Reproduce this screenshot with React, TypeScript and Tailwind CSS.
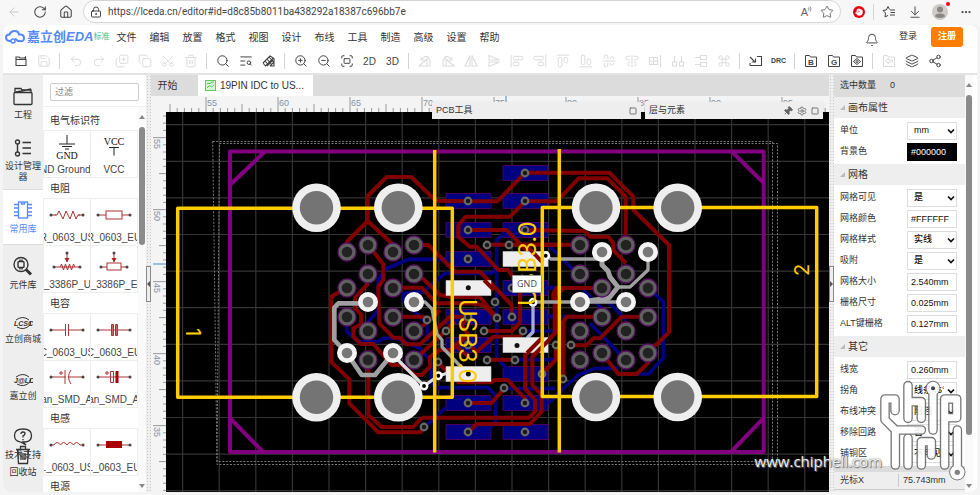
import { type ReactNode } from 'react'
import {
  AlignCenterHorizontal, AlignCenterVertical, AlignEndHorizontal, AlignEndVertical,
  AlignStartHorizontal, AlignStartVertical, ArrowDownToLine, ArrowLeft, Bell, Command,
  Copy, CopyPlus, Ellipsis, Fullscreen, Hand, House, Layers, LockKeyhole,
  Pin, Redo2, RotateCw, Save, Scissors, Search, Settings,
  Share2, Square, Star, TextSearch, Trash2, Undo2, ZoomIn, ZoomOut
} from 'lucide-react'

const MENUS = ['文件', '编辑', '放置', '格式', '视图', '设计', '布线', '工具', '制造', '高级', '设置', '帮助']

interface Tool {
  label: string
  icon: ReactNode
  disabled?: boolean
}

const S = 'size-3.5 stroke-[1.7]'

const Glyph = ({ d }: { d: string }) => (
  <svg viewBox="0 0 14 14" className="size-3.5" fill="none" stroke="currentColor" strokeWidth="1.100">
    <path d={d} />
  </svg>
)

const FolderMark = ({ mark }: { mark: 'B' | 'G' | 'eye' | 'back' }) => (
  <svg viewBox="0 0 14 14" className="size-3.5" fill="none" stroke="currentColor">
    <path d="M1.500 12.500V1.500h4l1 1.500h6v9.500z" />
    {mark === 'eye' && <><path d="M3.500 7.500 7 4.500l3.500 3L7 10.500z" /><circle cx="7" cy="7.500" r="1" /></>}
    {mark === 'back' && <path d="M6.500 4.500l-3 2.500 3 2.500v-1.500h4v-2h-4z" />}
    {mark.length === 1 && (
      <text x="7" y="10.500" textAnchor="middle" fontSize="8" fontWeight="700" stroke="none" fill="currentColor">{mark}</text>
    )}
  </svg>
)

const TOOL_GROUPS: Tool[][] = [
  [
    { label: '打开', icon: <Glyph d="M2 5.500h10v6H2zM2 5.500V3h3l1 1h4.500l1-1v2.500" /> },
    { label: '保存', icon: <Save className={S} />, disabled: true }
  ],
  [
    { label: '撤销', icon: <Undo2 className={S} />, disabled: true },
    { label: '重做', icon: <Redo2 className={S} />, disabled: true },
    { label: '克隆', icon: <CopyPlus className={`${S} -scale-y-100`} />, disabled: true },
    { label: '复制', icon: <Copy className={S} />, disabled: true },
    { label: '剪切', icon: <Scissors className={`${S} -rotate-90`} />, disabled: true },
    { label: '删除', icon: <Trash2 className={S} />, disabled: true }
  ],
  [
    { label: '查找', icon: <Search className={S} /> },
    { label: '查找相似', icon: <TextSearch className={S} /> },
    { label: '测量', icon: <Glyph d="M1 9 8 2l4 2.500V12H8M1 9l2.500 3L11 4.500M3 7l3.500 4M5 5l4 5M7 3l4.500 5M5 12l6-6M8 12l4-4" /> }
  ],
  [
    { label: '放大', icon: <ZoomIn className={S} /> },
    { label: '缩小', icon: <ZoomOut className={S} /> },
    { label: '适应窗口', icon: <Fullscreen className={S} /> },
    { label: '2D', icon: <span className="text-[10px]">2D</span> },
    { label: '3D', icon: <span className="text-[10px]">3D</span> }
  ],
  [
    { label: '左旋', icon: <Glyph d="M1 12 9 5v7zM4 5q3-4 6-2l2 4V12H9M3 3v3h3" />, disabled: true },
    { label: '右旋', icon: <Glyph d="M13 12 5 5v7zM10 5q-3-4-6-2L2 7v5h3M11 3v3H8" />, disabled: true },
    { label: '水平翻转', icon: <Glyph d="M6 1.500V12H1zM8 1.500V12h5z" />, disabled: true },
    { label: '垂直翻转', icon: <Glyph d="M2 1.500 12.500 6H2zM2 12.500 12.500 8H2z" />, disabled: true },
    { label: '左对齐', icon: <AlignStartVertical className={S} />, disabled: true },
    { label: '右对齐', icon: <AlignEndVertical className={S} />, disabled: true },
    { label: '顶对齐', icon: <AlignStartHorizontal className={S} />, disabled: true },
    { label: '底对齐', icon: <AlignEndHorizontal className={S} />, disabled: true },
    { label: '水平居中', icon: <AlignCenterHorizontal className={S} />, disabled: true },
    { label: '垂直居中', icon: <AlignCenterVertical className={S} />, disabled: true },
    { label: '网格对齐', icon: <Glyph d="M1.500 3.500h4v7h-4zM5.500 3.500h4v7h-4zM1.500 7h8M12.500 1v12" />, disabled: true },
    { label: '水平分布', icon: <Glyph d="M1.500 8h4v4h-4zM8.500 8h4v4h-4zM3.500 2v6M10.500 2v6" />, disabled: true },
    { label: '垂直分布', icon: <Glyph d="M6.500 1.500h6v4h-6zM6.500 8.500h6v4h-6zM1 3.500h5.500M1 10.500h5.500" />, disabled: true },
    { label: '阵列', icon: <Command className={S} />, disabled: true }
  ],
  [
    { label: '导入变更', icon: <Glyph d="M1 11.500h11.500v-9H8M1 3l5 5M6.500 4.500V8H3M1 11.500V9" /> },
    { label: '设计规则检查', icon: <span className="text-[7px] font-semibold">DRC</span> }
  ],
  [
    { label: '物料清单', icon: <FolderMark mark="B" /> },
    { label: '制造文件', icon: <FolderMark mark="G" /> },
    { label: '坐标文件', icon: <FolderMark mark="eye" /> }
  ],
  [
    { label: '返回', icon: <FolderMark mark="back" />, disabled: true },
    { label: '图层', icon: <Layers className={S} /> },
    { label: '分享', icon: <Share2 className={S} /> }
  ]
]

function BrowserBar() {
  return (
    <div className="flex h-[25px] shrink-0 items-start bg-[#f7f7f7] text-[#444]">
      <div className="flex h-6 w-[83px] items-center gap-3 pl-[7px]">
        <button aria-label="返回"><ArrowLeft className="size-3.5 stroke-[1.5] text-[#c4c4c4]" /></button>
        <button aria-label="刷新"><RotateCw className="size-3.5 stroke-[1.8]" /></button>
        <button aria-label="主页"><House className="size-3.5 stroke-[1.8]" /></button>
      </div>
      <div className="flex h-[23px] flex-1 items-center rounded-full border border-[#d5d5d5] bg-white px-1.5">
        <LockKeyhole className="size-3 shrink-0 stroke-2" />
        <input
          aria-label="地址"
          readOnly
          value="https://lceda.cn/editor#id=d8c85b8011ba438292a18387c696bb7e"
          className="min-w-0 flex-1 bg-transparent pl-1.5 font-[Roboto,sans-serif] text-[10px] text-[#444] outline-none"
        />
        <button aria-label="朗读" className="flex items-start px-2 text-[11px] leading-3 text-[#666]">
          A<svg viewBox="0 0 4 6" className="h-1.5 w-1" fill="none" stroke="currentColor" strokeWidth="0.700"><path d="M.5 1.500q1 1.500 0 3M2 .5q2 2.500 0 5" /></svg>
        </button>
        <button aria-label="收藏"><Star className="size-3.5 stroke-[1.4] text-[#555]" /></button>
      </div>
      <div className="flex h-6 w-[139px] items-center pl-3">
        <button aria-label="拦截广告" className="flex size-3 items-center justify-center rounded-full bg-[#e60012]">
          <Hand className="size-2 fill-white stroke-2 text-white" />
        </button>
        <span className="ml-2 h-4 w-px bg-[#d5d5d5]" />
        <button aria-label="收藏夹" className="ml-2">
          <svg viewBox="0 0 14 14" className="size-3.5" fill="none" stroke="currentColor"><path d="M7.500 4.500 6 1.500 4.300 5 1 5.500l2.500 2.500L3 12l3-1.600M8 5h5M8.500 7.500H13M8 10h5" /></svg>
        </button>
        <button aria-label="下载" className="ml-3"><ArrowDownToLine className="size-3.5 stroke-[1.6]" /></button>
        <button aria-label="用户" className="relative ml-2.5 size-4 rounded-full bg-[#cfcbc8]">
          <svg viewBox="0 0 16 16" className="size-4" fill="#8d8783"><circle cx="8" cy="5.500" r="3" /><path d="M3 12.500q0-3 5-3t5 3q-5 3-10 0z" /></svg>
          <span className="absolute -top-0.5 -right-0.5 size-1 rounded-full bg-[#f00018]" />
        </button>
        <button aria-label="更多" className="ml-3"><Ellipsis className="size-3 stroke-[2.5]" /></button>
      </div>
    </div>
  )
}

function Header() {
  return (
    <header className="shrink-0 border-b-2 border-[#e4e4e4] bg-white">
      <div className="flex h-6 items-center pr-3.5 pl-0.5">
        <svg viewBox="0 0 20 14" className="h-3.5 w-5 shrink-0" fill="none" stroke="#5588ff" strokeWidth="2">
          <path d="M6 11H4.500Q1 10.500 1 7.500 1 4.500 4.500 4.500 6 1 9.500 1q4 0 4.500 3.500 5-.5 5 3.500t-4 3h-2L10 8.500" />
          <circle cx="8" cy="11" r="2" strokeWidth="1.500" />
        </svg>
        <span className="ml-0.5 text-[13px] leading-5 font-bold whitespace-nowrap text-[#5588ff]">
          嘉立创<i>EDA</i>
        </span>
        <span className="text-[8px] whitespace-nowrap text-[#35c496]">标准</span>
        <nav className="ml-[7px] flex gap-[13px] text-[10px] text-[#333]">
          {MENUS.map(m => <button key={m} className="w-5 whitespace-nowrap">{m}</button>)}
        </nav>
        <button aria-label="通知" className="mt-1.5 ml-auto"><Bell className="size-3.5 stroke-[1.6] text-[#444]" /></button>
        <a href="#login" className="ml-5 text-[9px] text-[#333]">登录</a>
        <button className="ml-3.5 h-5 w-8 rounded-[3px] bg-[#ff7d00] text-[9px] font-bold text-white">注册</button>
      </div>
      <div className="flex h-6 items-center pl-1.5 text-[#444]">
        {TOOL_GROUPS.map((group, i) => (
          <div key={i} className="flex items-center">
            {i > 0 && <span className="mx-1 h-4 w-px bg-[#d4d4d4]" />}
            {group.map(t => (
              <button
                key={t.label}
                aria-label={t.label}
                disabled={t.disabled}
                className="flex h-5 w-[23px] items-center justify-center disabled:text-[#dcdcdc]"
              >
                {t.icon}
              </button>
            ))}
          </div>
        ))}
      </div>
    </header>
  )
}

// Left navigation
const NAV = [
  { label: '工程', icon: <svg viewBox="0 0 22 20" className="h-5 w-[22px]" fill="none" stroke="currentColor" strokeWidth="1.300"><rect x="2" y="6.500" width="18" height="12" rx="1" /><path d="M3 6.500V2.500h6l1 1.500h9v2.500M4 6l6-1 9-2" /></svg> },
  { label: '设计管理器', icon: <svg viewBox="0 0 18 18" className="size-[18px] shrink-0" fill="none" stroke="currentColor" strokeWidth="1.400"><circle cx="3.500" cy="3" r="2" /><circle cx="3.500" cy="15" r="2" /><path d="M3.500 5v8M8.500 3.500H17M8.500 9H17M8.500 14.500H17" /></svg> },
  { label: '常用库', icon: <svg viewBox="0 0 20 20" className="size-5" fill="none" stroke="currentColor" strokeWidth="1.300"><rect x="5.500" y="2" width="9" height="16" /><path d="M1 4.500h4.500M1 8h4.500M1 12h4.500M1 15.500h4.500M14.500 4.500H19M14.500 8H19M14.500 12H19M14.500 15.500H19M8.500 2v2h3V2" /></svg> },
  { label: '元件库', icon: <svg viewBox="0 0 20 20" className="size-5" fill="none" stroke="currentColor" strokeWidth="1.400"><circle cx="8" cy="8.500" r="7" /><path d="m13 13.500 5 5" strokeWidth="3" /><rect x="5" y="5.500" width="6" height="6" rx="1" /><path d="M7 3.500v2M9 3.500v2M7 11.500v2M9 11.500v2" /></svg> },
  { label: '立创商城', icon: <svg viewBox="0 0 20 14" className="h-3.5 w-5"><path d="M3 4q7-5 13 0M4 11q7 4 13-2 1.500-2 0-4" fill="none" stroke="currentColor" /><text x="1" y="9.500" fontSize="7" fontWeight="700" fontStyle="italic" fill="currentColor">LCSC</text></svg> },
  { label: '嘉立创', icon: <svg viewBox="0 0 20 14" className="h-3.5 w-5"><path d="M3 4q7-5 13 0M4 11q7 4 13-2 1.500-2 0-4" fill="none" stroke="currentColor" /><text x="1" y="9.500" fontSize="7" fontWeight="700" fontStyle="italic" fill="currentColor">J@LC</text></svg> },
  { label: '技术支持', icon: <svg viewBox="0 0 20 18" className="h-[18px] w-5" fill="none" stroke="currentColor" strokeWidth="1.300"><path d="M10 1q8.500 0 8.500 6.500T11 14h-1l3 3-6-3.200Q1.500 13 1.500 7.500 1.500 1 10 1z" /><path d="M8 6q0-2 2-2t2 1.700Q12 7 10 7.800V9.500M10 11v1.300" /></svg> }
]

function SideNav() {
  return (
    <nav className="relative flex w-10 shrink-0 flex-col overflow-hidden bg-[#eee] text-[9px] leading-[11px] text-[#333]">
      {NAV.map(n => (
        <button
          key={n.label}
          className={
            n.label === '常用库'
              ? 'flex h-14 shrink-0 flex-col items-center justify-center gap-1 border-y border-[#ddd] bg-white text-[#5588ff]'
              : 'flex h-[57px] shrink-0 flex-col items-center justify-center gap-1'
          }
        >
          {n.icon}
          <span className="w-9">{n.label}</span>
        </button>
      ))}
      <button className="absolute bottom-3.5 left-0 flex w-10 flex-col items-center">
        <svg viewBox="0 0 16 20" className="h-5 w-4" fill="none" stroke="currentColor" strokeWidth="1.300">
          <path d="M1 4.500h14M5.500 4V1.500h5V4M2.500 4.500l1 14h9l1-14M6 8v7M8 8v7M10 8v7" />
        </svg>
        <span className="mt-0.5">回收站</span>
      </button>
    </nav>
  )
}

// Component library
const Leads = () => (
  <>
    <path d="M4 15h32" stroke="#a33" />
    <circle cx="4" cy="15" r="1.500" fill="#444" /><circle cx="36" cy="15" r="1.500" fill="#444" />
  </>
)

const PotLeads = () => (
  <>
    <path d="M7 20h26M20 6v9" stroke="#a33" />
    <circle cx="7" cy="20" r="1.500" fill="#444" /><circle cx="33" cy="20" r="1.500" fill="#444" />
    <circle cx="20" cy="6" r="1.500" fill="#444" />
    <path d="m17.500 11 2.500 4.500 2.500-4.500z" fill="#a22" />
  </>
)

const LIBRARY: { title: string; parts: { name: string; art: ReactNode }[] }[] = [
  {
    title: '电气标识符',
    parts: [
      { name: 'GND Grounded', art: <><path d="M20 3v9M12 12h16M15 14.500h10M18 17h4" stroke="#222" /><text x="20" y="27" textAnchor="middle" fontSize="10" className="font-['Liberation_Serif',serif]" fill="#111">GND</text></> },
      { name: 'VCC', art: <><text x="20" y="13" textAnchor="middle" fontSize="10" className="font-['Liberation_Serif',serif]" fill="#111">VCC</text><path d="M15 15.500h10M20 15.500v8" stroke="#222" /></> }
    ]
  },
  {
    title: '电阻',
    parts: [
      { name: 'R_0603_US', art: <><Leads /><path d="M9 15h22" stroke="#fff" strokeWidth="2" /><path d="M8 15h2l2-4 4 8 3-8 4 8 3-8 3 8 2-4h2" stroke="#a33" /></> },
      { name: 'R_0603_EU', art: <><Leads /><rect x="12" y="11" width="16" height="8" fill="#fff" stroke="#a33" /></> },
      { name: 'R_3386P_US', art: <><PotLeads /><path d="m13 20 1.500-3 2 6 2-6 2 6 2-6 2 6 2-6 1.500 3" stroke="#a33" /></> },
      { name: 'R_3386P_EU', art: <><PotLeads /><rect x="13" y="16" width="14" height="7" fill="#fff" stroke="#a33" /></> }
    ]
  },
  {
    title: '电容',
    parts: [
      { name: 'C_0603_US', art: <><Leads /><path d="M19 15h2" stroke="#fff" strokeWidth="3" /><path d="M18.500 9v12M21.500 9v12" stroke="#a33" /></> },
      { name: 'C_0603_EU', art: <><Leads /><path d="M17.500 9.500h2v11h-2zM21.500 9.500h2v11h-2z" fill="#c66" stroke="#a33" /></> },
      { name: 'Tan_SMD_A_', art: <><Leads /><path d="M18 8v14M24 8q-5 7 0 14M12 11h4M14 9v4" stroke="#a33" /><path d="M19 15h2" stroke="#fff" strokeWidth="2" /></> },
      { name: 'Tan_SMD_A_', art: <><Leads /><path d="M23 9v12" stroke="#a00" strokeWidth="3" /><path d="M16.500 9.500h3v11h-3zM11 11h4M13 9v4" stroke="#a33" /></> }
    ]
  },
  {
    title: '电感',
    parts: [
      { name: 'L_0603_US', art: <><circle cx="4" cy="15" r="1.500" fill="#444" /><circle cx="36" cy="15" r="1.500" fill="#444" /><path d="M4 15h3q3-5 6.500 0 3-5 6.500 0 3-5 6.500 0 3-5 6.500 0h3" stroke="#a33" /></> },
      { name: 'L_0603_EU', art: <><Leads /><rect x="12" y="11" width="16" height="7" fill="#a00" /></> }
    ]
  },
  { title: '电源', parts: [] }
]

function Library() {
  return (
    <aside className="flex w-[103px] shrink-0 flex-col bg-white">
      <div className="flex h-8 shrink-0 items-center border-b border-[#f0f0f0] px-[7px] pt-0.5">
        <input aria-label="过滤" placeholder="过滤" className="h-[18px] w-full rounded-xs border border-[#ccc] px-1 text-[9px] placeholder:text-[#888]" />
      </div>
      <div className="flex min-h-0 flex-1">
        <div className="min-w-0 flex-1 overflow-hidden pt-[3px]">
          {LIBRARY.map(group => (
            <section key={group.title}>
              <h2 className="h-5 pl-[7px] text-[10px] leading-[22px] whitespace-nowrap text-[#333]">{group.title}</h2>
              <div className="grid grid-cols-2 border-t border-l border-[#eee]">
                {group.parts.map((p, i) => (
                  <button key={i} className="flex h-[47px] min-w-0 flex-col items-center overflow-hidden border-r border-b border-[#eee]">
                    <svg viewBox="0 0 40 30" className="h-8 w-10 shrink-0" fill="none">{p.art}</svg>
                    <span className="flex w-full justify-center overflow-hidden text-[10px] leading-[14px] whitespace-nowrap text-[#444]">
                      {p.name}
                    </span>
                  </button>
                ))}
              </div>
            </section>
          ))}
        </div>
        <ScrollBar thumb="h-[118px]" />
      </div>
    </aside>
  )
}

function ScrollBar({ thumb }: { thumb: string }) {
  return (
    <div className="flex w-2 shrink-0 flex-col items-center bg-[#fafafa] pt-1 pb-1">
      <svg viewBox="0 0 6 4" className="my-1 h-1 w-1.5 shrink-0" fill="#888"><path d="M0 4 3 0l3 4z" /></svg>
      <span className={`mt-1 w-1.5 rounded-full bg-[#8b8b8b] ${thumb}`} />
      <svg viewBox="0 0 6 4" className="mt-auto h-1 w-1.5 shrink-0" fill="#888"><path d="M0 0l3 4 3-4z" /></svg>
    </div>
  )
}

function Splitter({ side }: { side: 'left' | 'right' }) {
  return (
    <div className="flex w-[5px] shrink-0 items-center bg-[#eee] bg-[radial-gradient(#c8c8c8_25%,transparent_30%)] bg-size-[3px_3px]">
      <button aria-label="折叠" className="flex h-9 w-[5px] items-center justify-center border border-[#888] bg-[#eee]">
        <svg viewBox="0 0 3 6" className="h-1.5 w-[3px]" fill="#555">
          <path d={side === 'left' ? 'M3 0v6L0 3z' : 'M0 0v6l3-3z'} />
        </svg>
      </button>
    </div>
  )
}

// Rulers, 72px for each 5mm
function TopRuler() {
  return (
    <svg className="block h-4 w-full bg-[#f4f4f4]" stroke="#999">
      {Array.from({ length: 92 }, (_, i) => {
        const x = 19 + i * 7.2
        const h = i % 10 === 5 ? 15 : i % 5 === 0 ? 8 : 4
        return <path key={i} d={`M${x} 16v${-h}`} />
      })}
      {Array.from({ length: 9 }, (_, i) => (
        <text key={i} x={56 + i * 72} y="10" fontSize="9" stroke="none" fill="#8791a0">{55 + i * 5}</text>
      ))}
      <path d="M355 0v6" stroke="#3b8fd0" />
    </svg>
  )
}

function SideRuler() {
  return (
    <svg className="block h-full w-[15px] shrink-0 bg-[#f4f4f4]" stroke="#999">
      {Array.from({ length: 54 }, (_, i) => {
        const y = 4 + i * 7.2
        const w = (i + 7) % 10 === 0 ? 13 : (i + 7) % 5 === 0 ? 7 : 3
        return <path key={i} d={`M15 ${y}h${-w}`} />
      })}
      {[55, 50, 45, 40, 35].map((n, i) => (
        <text key={n} transform={`translate(3 ${27 + i * 72}) rotate(90)`} fontSize="9" stroke="none" fill="#8791a0">{n}</text>
      ))}
      <path d="M2 152h13" stroke="#3b8fd0" />
    </svg>
  )
}

// Board geometry. Traces are stored in thirds of a pixel,
// each list relative to the origin of its block.
const TRACES: { at: [number, number]; red: string; blue: string; net: string }[] = [
  {
    at: [165, 110],
    red: 'M545 425V396L608 333V258L665 201H739L812 272L910 274M608 333L683 403',
    blue: 'M655 480L730 448H910',
    net: ''
  },
  {
    at: [325, 225],
    red: `M130 60L175 118V163L160 185V208L163 295L205 338H225L243 358H285L375 275H430
      M268 60H310L390 140H465L560 240V275M268 146L295 162L345 210L380 216H465L516 280
      M204 188H290L335 235H435L475 240L510 275M65 188L18 215V410L73 463V535L160 622H285L298 607
      M130 175L90 218V250L108 268V298L85 310V335L108 357H145L200 420H230L270 450H290L315 425V395L345 375H380L430 330
      M204 275H295L307 286M130 405V570L170 606H265L290 578M268 405L362 318L390 290M268 320L310 290L345 255
      M290 578H612L630 560V525L600 490V390L655 340M338 412L400 472H500L508 465H548L601 522V534
      M430 534H500L538 490M430 620L455 597H615L650 560V510L622 480V395L690 325V210L720 188
      M486 404H571M478 318H560L585 293V200M430 360L455 380L505 335H585L593 318M430 275L410 300L430 330L390 360L430 395
      M430 15H545L645 118M400 0V35L435 65H455L520 135H550L563 155M485 59H720`,
    blue: `M160 260V165L180 132L250 103H370M295 200L360 145H500L515 125V45L540 22M235 230V205L300 200M235 228L300 290
      M65 275V320L100 350H160L175 340H215L285 370L318 410V475L335 488H490L512 512V590L495 610M307 286V350
      M130 290L160 255M515 120V400L545 430M298 607L362 548M540 490H690M600 188H720M593 318H720M571 404H720M670 275H720`,
    net: 'M130 235H40L28 248V345L65 384L110 450H150L204 384'
  },
  {
    at: [420, 110],
    red: `M145 274H232L316 188H568L640 260V300L747 405V667L683 728M316 274L270 320H138L115 345V375
      M316 274H410L476 205H562L617 260V404M316 360L495 363L510 380H565L580 400V420L618 460M265 404H480M545 534H410L400 550V570`,
    blue: 'M385 404L455 475L480 491M385 534H410M490 540L560 610M683 534L730 575V745L685 792H650',
    net: ''
  },
  {
    at: [420, 300],
    red: `M545 50H440L430 65V238M683 50H605L540 115H520L500 136H453M407 136V180L365 222M545 158L595 222H650L683 190V158
      M404 0V100L335 165`,
    blue: 'M480 50H385M510 70L618 181M560 0L618 60M595 205H525L475 225L430 265L385 310',
    net: ''
  }
]

const SIGNAL_PADS = [
  [347, 252], [368, 245], [393, 252], [414, 245], [368, 274], [414, 274], [347, 288], [393, 288],
  [347, 317], [393, 317], [368, 331], [414, 331], [368, 360], [414, 360],
  [580, 245], [626, 245], [580, 274], [626, 274], [602, 288], [648, 288], [602, 317], [648, 317],
  [580, 331], [626, 331], [602, 353], [648, 353], [580, 360], [626, 360]
]

const GND_PADS = [[368, 302], [414, 302], [347, 353], [393, 353], [602, 252], [648, 252], [580, 302], [626, 302]]

const HOLES = [[316.5, 207.7], [398.3, 207.7], [596, 207.7], [677.7, 207.7], [316.5, 397.3], [398.3, 397.3], [596, 397], [677.7, 397]]

const VIAS = [
  [487, 245], [509, 245], [495, 302], [427, 320], [446, 331], [484, 331], [497, 318], [512, 317], [523, 331],
  [487, 360], [515, 360], [504, 388], [438, 362], [424, 427], [468, 230], [468, 259], [468, 317], [468, 345],
  [468, 403], [468, 432], [525, 230], [512, 288], [542, 374], [556, 345], [525, 403], [525, 432], [571, 345],
  [563, 379], [525, 173], [525, 201], [468, 201]
]

const GND_VIAS = [[545.7, 255.7], [533, 302.3], [438.3, 375.7], [424, 386]]

const FINGERS = [
  ...[201, 230, 259, 288, 317, 345, 374, 403, 432].map(y => ({ x: 446, y, gnd: y === 288 || y === 374 })),
  ...[173, 201, 230, 259, 288, 317, 345, 374, 403, 432].map(y => ({ x: 503, y, gnd: y === 259 || y === 345 }))
]

function Board() {
  const traces = (kind: 'red' | 'blue' | 'net') =>
    TRACES.map((t, i) => (
      <path key={i} d={t[kind]} transform={`translate(${t.at[0]} ${t.at[1]}) scale(.33333)`} />
    ))

  return (
    <svg className="block min-w-0 flex-1 bg-black" aria-label="PCB">
      <g transform="translate(-166 -112)" fill="none" strokeLinejoin="round">
        <g stroke="#343434" strokeWidth="1.200">
          {Array.from({ length: 40 }, (_, i) => <path key={i} d={`M${182.6 + i * 36.6} 0v1200`} />)}
          {Array.from({ length: 24 }, (_, i) => <path key={i} d={`M0 ${124.7 + i * 36.6}h2000`} />)}
        </g>
        <g stroke="#777" strokeDasharray="2 1.500">
          <path d="M212.700 141.500H772.500V461.500H217L212.700 141.500" />
          <path d="M219.500 143.500H777.500V464.500H217L219.500 143.500" />
        </g>
        <g fill="#000080" stroke="#480060">
          {FINGERS.filter(f => !f.gnd).map(f => <rect key={`${f.x}-${f.y}`} x={f.x} y={f.y - 7.5} width="45" height="15" />)}
        </g>
        <g stroke="#000080" strokeWidth="11">{traces('blue')}</g>
        <g stroke="#800000" strokeWidth="12">{traces('red')}</g>
        <g stroke="#a0a0a0" strokeWidth="14">{traces('net')}</g>
        <g stroke="#a0a0a0" strokeWidth="3.300">
          <path d="M414 302h11l7 7 5 25 5 6v7l24 25M546 256l5 3h51M533 302h93M648 252v18l-18 17h-13" />
          <path d="M602 252v13l6 6 2 6 8 10-9 11-28 4" strokeWidth="5" />
          <path d="M533 302v30l-6 6" stroke="#aaaad0" />
          <path d="M397 359l27 27 14-10 10-3" stroke="#ddd" />
        </g>
        <g fill="#eee" stroke="#ccc" strokeWidth="0.600">
          {FINGERS.filter(f => f.gnd).map(f => <rect key={`${f.x}-${f.y}`} x={f.x} y={f.y - 7.5} width="45" height="15" />)}
        </g>
        <path d="M484 280l10 10M529 248l13 14M527 353l16-16M534 355l16-16" stroke="#800000" strokeWidth="4" />

        {SIGNAL_PADS.map(([x, y]) => (
          <g key={`${x}-${y}`}>
            <circle cx={x} cy={y} r="9" fill="#606060" stroke="#5c1266" strokeWidth="1.300" />
            <circle cx={x} cy={y} r="5.300" fill="#222" />
          </g>
        ))}
        {GND_PADS.map(([x, y]) => (
          <g key={`${x}-${y}`}>
            <circle cx={x} cy={y} r="10" fill="#f4f4f4" />
            <circle cx={x} cy={y} r="5.300" fill="#777" />
          </g>
        ))}
        <g fill="#181818" stroke="#686868" strokeWidth="2.200">
          {VIAS.map(([x, y]) => <circle key={`${x}-${y}`} cx={x} cy={y} r="3.300" />)}
        </g>
        <g fill="#111">
          <circle cx="468.300" cy="287.700" r="2.500" /><circle cx="517" cy="345.500" r="2.500" /><circle cx="468.300" cy="374" r="2.500" />
        </g>
        <g fill="#000" stroke="#fff" strokeWidth="2.500">
          {GND_VIAS.map(([x, y]) => <circle key={`${x}-${y}`} cx={x} cy={y} r="3.200" />)}
        </g>

        <path
          d="M230 151.500H763.700V452H230zM265 151.500L230 185M230 418L263 452M731.700 151.500L763.700 183M763.700 418L731 452"
          stroke="#800080" strokeWidth="4"
        />
        <g stroke="#ffcc00" strokeWidth="3.500">
          <path d="M177.700 208.300H452.300V397.300H177.700z" />
          <path d="M542.300 207.500H816.700V396.500H542.300z" />
          <path d="M434.700 150V452.500M559.300 149V452.500" />
        </g>
        {HOLES.map(([x, y]) => (
          <g key={`${x}-${y}`}>
            <circle cx={x} cy={y} r="24.300" fill="#efefef" />
            <circle cx={x} cy={y} r="16.700" fill="#747474" />
          </g>
        ))}
        <g fill="#ffcc00" className="font-[Inter,sans-serif]">
          <text transform="translate(459 299) rotate(90)" fontSize="24">USB3.0</text>
          <text transform="translate(536 306) rotate(-90)" fontSize="24">USB3.0</text>
          <text transform="translate(186 328) rotate(90)" fontSize="20">1</text>
          <text transform="translate(809 276) rotate(-90)" fontSize="20">2</text>
        </g>
        <rect x="512.500" y="275.500" width="29" height="17" fill="#fff" stroke="#999" />
        <text x="527" y="287" textAnchor="middle" fontSize="9" fill="#444" className="font-['Open_Sans',sans-serif]">GND</text>
      </g>
    </svg>
  )
}

function Workspace() {
  return (
    <main className="relative flex min-w-0 flex-1 flex-col">
      <div className="flex h-[21px] shrink-0 bg-[#dcdcdc] text-[10px] text-[#333]">
        <button className="w-[47px] pr-3.5">开始</button>
        <button className="flex w-[115px] items-center gap-1 bg-white pl-[7px] whitespace-nowrap">
          <svg viewBox="0 0 11 11" className="size-[11px] shrink-0" fill="none" stroke="#62c95e">
            <rect x="0.500" y="0.500" width="10" height="10" fill="#d9f5d6" /><path d="M2 3.500h3l2-1.500h2M2 8l2.500-2.500L6.500 7 9 5" />
          </svg>
          19PIN IDC to US...
        </button>
      </div>
      <TopRuler />
      <div className="flex min-h-0 flex-1">
        <SideRuler />
        <Board />
      </div>
      <div className="absolute top-[27px] left-[281px] flex gap-1 text-[9px] text-[#333]">
        <div className="flex h-[17px] w-[209px] items-center justify-between bg-[#eee] px-1 shadow-sm">
          PCB工具
          <button aria-label="展开"><Square className="size-2 stroke-[3] text-[#777]" /></button>
        </div>
        <div className="flex h-[17px] w-[178px] items-center bg-[#eee] px-1 shadow-sm">
          层与元素
          <button aria-label="固定" className="ml-auto"><Pin className="size-2.5 rotate-45 fill-[#666] text-[#666]" /></button>
          <button aria-label="设置" className="mx-1"><Settings className="size-2.5 text-[#666]" /></button>
          <button aria-label="展开"><Square className="size-2 stroke-[3] text-[#777]" /></button>
        </div>
      </div>
    </main>
  )
}

// Properties
type Field = { label: string; value: string; select?: boolean; dark?: boolean }

const SECTIONS: { title: string; fields: Field[] }[] = [
  {
    title: '画布属性',
    fields: [
      { label: '单位', value: 'mm', select: true },
      { label: '背景色', value: '#000000', dark: true }
    ]
  },
  {
    title: '网格',
    fields: [
      { label: '网格可见', value: '是', select: true },
      { label: '网格颜色', value: '#FFFFFF' },
      { label: '网格样式', value: '实线', select: true },
      { label: '吸附', value: '是', select: true },
      { label: '网格大小', value: '2.540mm' },
      { label: '栅格尺寸', value: '0.025mm' },
      { label: 'ALT键栅格', value: '0.127mm' }
    ]
  },
  {
    title: '其它',
    fields: [
      { label: '线宽', value: '0.260mm' },
      { label: '拐角', value: '线条45°', select: true },
      { label: '布线冲突', value: '阻挡', select: true },
      { label: '移除回路', value: '否', select: true },
      { label: '铺铜区', value: '不可见', select: true }
    ]
  }
]

function FieldRow({ label, value, select, dark }: Field) {
  return (
    <div className="flex h-[21px] items-center justify-between pr-2 pl-1.5">
      <label htmlFor={label}>{label}</label>
      {select ? (
        <div className="relative flex">
          <select id={label} defaultValue={value} className="h-[18px] w-[50px] appearance-none border border-[#ddd] bg-white pr-3 pl-1.5 text-[9px] font-medium text-[#111]">
            <option>{value}</option>
          </select>
          <svg viewBox="0 0 8 6" className="pointer-events-none absolute top-1.5 right-0.5 h-1.5 w-2" fill="none" stroke="#111" strokeWidth="1.700">
            <path d="m1 1.500 3 3 3-3" />
          </svg>
        </div>
      ) : (
        <input
          id={label}
          defaultValue={value}
          className={
            dark
              ? 'h-[18px] w-[50px] border border-black bg-black px-[3px] text-[9px] text-white'
              : 'h-[18px] w-[50px] border border-[#ddd] bg-white px-[3px] text-[9px] text-[#111]'
          }
        />
      )}
    </div>
  )
}

function Properties() {
  return (
    <aside className="flex w-[143px] shrink-0 bg-white text-[9px] text-[#333]">
      <div className="flex min-w-0 flex-1 flex-col overflow-hidden">
        <div className="flex h-[22px] shrink-0 items-center gap-3.5 bg-[#dcdcdc] pl-1.5">
          <span>选中数量</span>
          <span>0</span>
        </div>
        {SECTIONS.map(s => (
          <section key={s.title} className="shrink-0">
            <h2 className="flex h-[21px] items-center gap-[3px] bg-[#eee] pl-1.5 text-[10px]">
              <svg viewBox="0 0 5 5" className="size-[5px]" fill="#bbb"><path d="M5 0v5H0z" /></svg>
              {s.title}
            </h2>
            <div className="py-0.5">
              {s.fields.map(f => <FieldRow key={f.label} {...f} />)}
            </div>
          </section>
        ))}
        <div className="flex-1 bg-[#eee]">
          <div className="h-1.5 bg-[#dcdcdc]" />
          <dl className="flex h-[18px] items-center border-b border-[#ccc]">
            <dt className="w-[65px] border-r border-[#ccc] pl-1.5">光标X</dt>
            <dd className="pl-1">75.743mm</dd>
          </dl>
        </div>
      </div>
      <ScrollBar thumb="h-[340px]" />
      <span className="w-1" />
    </aside>
  )
}

const MARK = `M711 347V312H681V374L712 405V510M712 405H790M750 272V370M750 320H790V370M825 282V405
  M860 510V312H896V368H868M750 430V510M790 510V440H820V480M898 405V515`

function Watermark() {
  return (
    <div className="pointer-events-none absolute right-3.5 bottom-3.5 flex items-end">
      <span className="mb-2.5 font-['Open_Sans',sans-serif] text-[15px] leading-5 text-[#eee] [text-shadow:0_0_2px_#555,1px_1px_1px_#777]">
        www.chiphell.com
      </span>
      <svg viewBox="660 252 264 306" className="-ml-1 h-[102px] w-[88px] opacity-90" fill="none" strokeLinejoin="round" strokeLinecap="round">
        <g stroke="#6a6a6a" strokeWidth="29"><path d={MARK} /><circle cx="825" cy="280" r="8" /><circle cx="898" cy="532" r="10" /></g>
        <g stroke="#fff" strokeWidth="21"><path d={MARK} /><circle cx="825" cy="280" r="9" /><circle cx="898" cy="532" r="11" /></g>
        <circle cx="898" cy="532" r="8" fill="#777" />
        <circle cx="825" cy="280" r="6" fill="#333" />
      </svg>
    </div>
  )
}

export default function App() {
  return (
    <div className="relative flex h-screen flex-col overflow-hidden bg-[#f4f4f4] font-['Liberation_Sans','Noto_Sans_CJK_SC',sans-serif]">
      <BrowserBar />
      <div className="mx-[3px] mb-[3px] flex min-h-0 flex-1 flex-col overflow-hidden rounded-lg bg-white">
        <Header />
        <div className="flex min-h-0 flex-1">
          <SideNav />
          <Library />
          <Splitter side="left" />
          <Workspace />
          <Splitter side="right" />
          <Properties />
        </div>
      </div>
      <Watermark />
    </div>
  )
}
